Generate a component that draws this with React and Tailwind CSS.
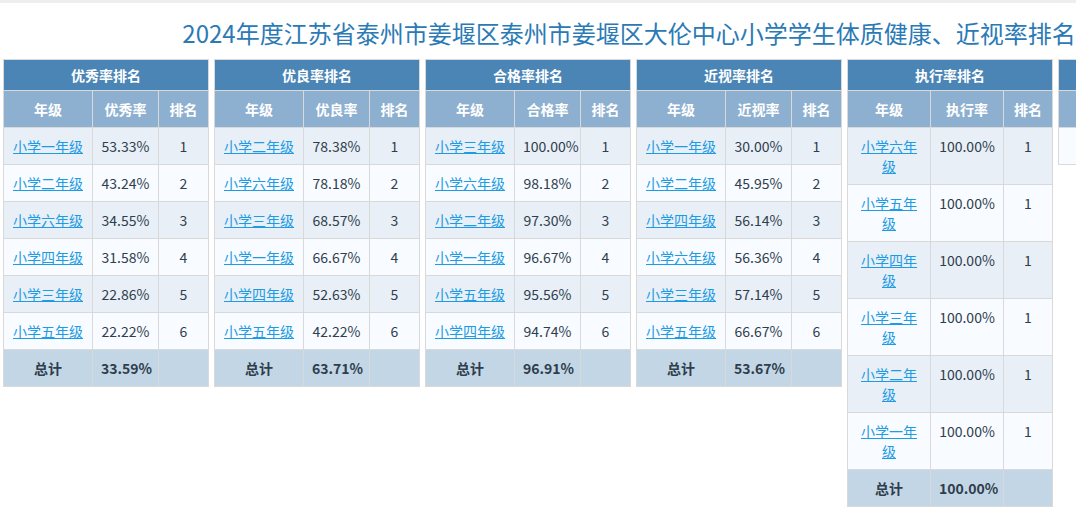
import React from "react";

const tables = [
  {
    title: "优秀率排名",
    col: "优秀率",
    total: "33.59%",
    widths: ["w-[89px]", "w-[66px]", "w-[50px]"],
    rows: [
      ["小学一年级", "53.33%", 1],
      ["小学二年级", "43.24%", 2],
      ["小学六年级", "34.55%", 3],
      ["小学四年级", "31.58%", 4],
      ["小学三年级", "22.86%", 5],
      ["小学五年级", "22.22%", 6],
    ],
  },
  {
    title: "优良率排名",
    col: "优良率",
    total: "63.71%",
    widths: ["w-[89px]", "w-[66px]", "w-[50px]"],
    rows: [
      ["小学二年级", "78.38%", 1],
      ["小学六年级", "78.18%", 2],
      ["小学三年级", "68.57%", 3],
      ["小学一年级", "66.67%", 4],
      ["小学四年级", "52.63%", 5],
      ["小学五年级", "42.22%", 6],
    ],
  },
  {
    title: "合格率排名",
    col: "合格率",
    total: "96.91%",
    widths: ["w-[89px]", "w-[66px]", "w-[50px]"],
    rows: [
      ["小学三年级", "100.00%", 1],
      ["小学六年级", "98.18%", 2],
      ["小学二年级", "97.30%", 3],
      ["小学一年级", "96.67%", 4],
      ["小学五年级", "95.56%", 5],
      ["小学四年级", "94.74%", 6],
    ],
  },
  {
    title: "近视率排名",
    col: "近视率",
    total: "53.67%",
    widths: ["w-[89px]", "w-[66px]", "w-[50px]"],
    rows: [
      ["小学一年级", "30.00%", 1],
      ["小学二年级", "45.95%", 2],
      ["小学四年级", "56.14%", 3],
      ["小学六年级", "56.36%", 4],
      ["小学三年级", "57.14%", 5],
      ["小学五年级", "66.67%", 6],
    ],
  },
  {
    title: "执行率排名",
    col: "执行率",
    total: "100.00%",
    widths: ["w-[83px]", "w-[73px]", "w-[49px]"],
    rows: [
      ["小学六年级", "100.00%", 1],
      ["小学五年级", "100.00%", 1],
      ["小学四年级", "100.00%", 1],
      ["小学三年级", "100.00%", 1],
      ["小学二年级", "100.00%", 1],
      ["小学一年级", "100.00%", 1],
    ],
  },
];

const cell = "border border-[#d9d9d9] px-[8px] py-[8px] text-center";

const RankTable = ({ t }) => {
  return (
    <table className="w-[205px] shrink-0 table-fixed border-collapse border border-[#d9d9d9] text-[14px] leading-[20px] text-[#2f3e4d]">
      <colgroup>
        {t.widths.map((w, i) => (
          <col key={i} className={w} />
        ))}
      </colgroup>
      <thead>
        <tr className="bg-[#4a85b6] text-white">
          <th colSpan={3} className="border border-[#d9d9d9] px-[8px] py-[5px] text-center font-bold">
            {t.title}
          </th>
        </tr>
        <tr className="bg-[#8db0d0] text-white">
          <th className={cell + " font-bold"}>年级</th>
          <th className={cell + " font-bold"}>{t.col}</th>
          <th className={cell + " font-bold"}>排名</th>
        </tr>
      </thead>
      <tbody>
        {t.rows.map((r, i) => (
          <tr
            key={i}
            className={i % 2 === 0 ? "bg-[#e8eff7]" : "bg-[#f8fbff]"}
          >
            <td className={cell + " align-top"}>
              <a href="#" className="text-[#1d9be3] underline">
                {r[0]}
              </a>
            </td>
            <td className={cell + " align-top"}>{r[1]}</td>
            <td className={cell + " align-top"}>{r[2]}</td>
          </tr>
        ))}
        <tr className="bg-[#c3d6e5] font-bold">
          <td className={cell}>总计</td>
          <td className={cell}>{t.total}</td>
          <td className={cell}></td>
        </tr>
      </tbody>
    </table>
  );
};

const App = () => {
  return (
    <div
      className="h-[525px] w-full overflow-hidden bg-white"
      style={{ fontFamily: '"Noto Sans CJK SC", "Noto Sans", sans-serif' }}
    >
      <div className="h-[3px] bg-[#eeeeee]" />
      <div className="w-[1258px]">
        <h1 className="pt-[14px] pb-[10px] text-center text-[24px] leading-[32px] font-normal text-[#2b7ab6]">
          2024年度江苏省泰州市姜堰区泰州市姜堰区大伦中心小学学生体质健康、近视率排名
        </h1>
        <div className="flex items-start gap-[5px] px-[3px]">
          {tables.map((t) => (
            <RankTable key={t.title} t={t} />
          ))}
          {/* extra table cut off at the right edge */}
          <table className="w-[205px] shrink-0 table-fixed border-collapse border border-[#d9d9d9] text-[14px] leading-[20px]">
            <thead>
              <tr className="bg-[#4a85b6] text-white">
                <th colSpan={3} className="border border-[#d9d9d9] py-[5px]">
                  &nbsp;
                </th>
              </tr>
              <tr className="bg-[#8db0d0] text-white">
                <th className={cell}>&nbsp;</th>
                <th className={cell}></th>
                <th className={cell}></th>
              </tr>
            </thead>
            <tbody>
              <tr className="bg-[#f8fbff]">
                <td colSpan={3} className={cell}>&nbsp;</td>
              </tr>
            </tbody>
          </table>
        </div>
      </div>
    </div>
  );
};

export default App;
